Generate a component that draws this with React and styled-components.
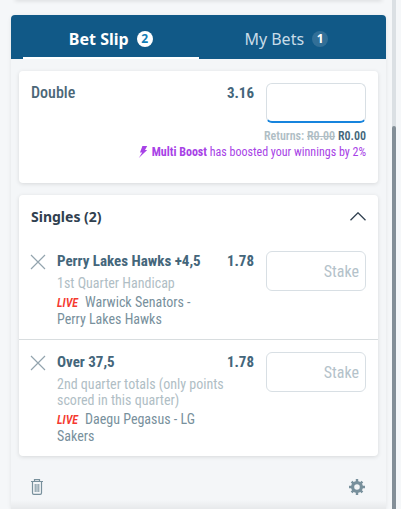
import React from 'react';
import styled, { createGlobalStyle } from 'styled-components';

const singles = [
	{
		name: 'Perry Lakes Hawks +4,5',
		market: '1st Quarter Handicap',
		event: 'Warwick Senators - Perry Lakes Hawks',
		odds: '1.78',
	},
	{
		name: 'Over 37,5',
		market: '2nd quarter totals (only points scored in this quarter)',
		event: 'Daegu Pegasus - LG Sakers',
		odds: '1.78',
	},
];

const App = () => {
	const [tab, setTab] = React.useState('slip');
	const [open, setOpen] = React.useState(true);

	return (
		<>
			<GlobalStyle />
			<Page>
				<Column>
					<PreviousPanel />
					<Panel>
						<Tabs>
							<Tab $active={tab === 'slip'} onClick={() => setTab('slip')}>
								Bet Slip <Count $active={tab === 'slip'}>2</Count>
							</Tab>
							<Tab $active={tab === 'bets'} onClick={() => setTab('bets')}>
								My Bets <Count $active={tab === 'bets'}>1</Count>
							</Tab>
						</Tabs>
						<Cards>
							<DoubleCard>
								<DoubleRow>
									<DoubleName>Double</DoubleName>
									<Odds>3.16</Odds>
									<StakeInput $focused aria-label='Double stake' />
								</DoubleRow>
								<Returns>
									Returns: <s>R0.00</s> <b>R0.00</b>
								</Returns>
								<Boost>
									<svg width='10' height='12' viewBox='0 0 10 12'>
										<path
											d='M4.4 0H9.2L7 4H9.2L0.8 12L4.2 6.6H2Z'
											fill='currentColor'
										/>
									</svg>
									<span>
										<b>Multi Boost</b> has boosted your winnings by 2%
									</span>
								</Boost>
							</DoubleCard>
							<Card>
								<SinglesHeader onClick={() => setOpen(!open)}>
									Singles (2)
									<svg width='16' height='9' viewBox='0 0 16 9'>
										<path
											d='M0.5 8.3L8 0.8L15.5 8.3'
											fill='none'
											stroke='currentColor'
											strokeWidth='1.3'
										/>
									</svg>
								</SinglesHeader>
								{open &&
									singles.map((bet) => (
										<Single key={bet.name}>
											<Remove aria-label='Remove'>
												<svg width='16' height='16' viewBox='0 0 16 16'>
													<path
														d='M1 1L15 15M15 1L1 15'
														fill='none'
														stroke='currentColor'
														strokeWidth='1.2'
													/>
												</svg>
											</Remove>
											<Details>
												<BetName>{bet.name}</BetName>
												<Market>{bet.market}</Market>
												<Event>
													<Live>LIVE</Live>
													{bet.event}
												</Event>
											</Details>
											<Odds>{bet.odds}</Odds>
											<StakeInput placeholder='Stake' />
										</Single>
									))}
							</Card>
						</Cards>
						<Footer>
							<svg width='12' height='16' viewBox='0 0 12 16'>
								<g fill='none' stroke='currentColor'>
									<path d='M0 2.5H12M3.5 2.5V0.6H8.5V2.5' strokeWidth='1.2' />
									<path
										d='M1.5 3V14.1Q1.5 15.4 2.8 15.4H9.2Q10.5 15.4 10.5 14.1V3'
										strokeWidth='1.2'
									/>
									<path d='M4.2 5V13M6 5V13M7.8 5V13' />
								</g>
							</svg>
							<svg width='16' height='16' viewBox='0 0 16 16'>
								<circle
									cx='8'
									cy='8'
									r='4.4'
									fill='none'
									stroke='currentColor'
									strokeWidth='3.2'
								/>
								<path
									d='M8 0V3M8 13V16M0 8H3M13 8H16M2.6 2.6L4.6 4.6M11.4 11.4L13.4 13.4M2.6 13.4L4.6 11.4M11.4 4.6L13.4 2.6'
									fill='none'
									stroke='currentColor'
									strokeWidth='2.4'
								/>
							</svg>
						</Footer>
					</Panel>
				</Column>
				<Scrollbar>
					<Thumb />
				</Scrollbar>
			</Page>
		</>
	);
};

const GlobalStyle = createGlobalStyle`
	* {
		box-sizing: border-box;
	}

	body {
		margin: 0;
		overflow: hidden;
		background-color: #f5f7f9;
		font-family: 'Roboto Condensed', Roboto, sans-serif;
		font-stretch: 75%;
	}

	button {
		border: none;
		padding: 0;
		background: none;
		cursor: pointer;
	}

	svg {
		display: block;
		flex: none;
	}
`;

const Page = styled.div`
	display: flex;
	height: 509px;
	overflow: hidden;
	padding-left: 11px;
`;

const Column = styled.div`
	width: 375px;
	display: flex;
	flex-direction: column;
`;

const PreviousPanel = styled.div`
	height: 4px;
	flex: none;
	margin: -4px 4px 15px;
	box-shadow: 0 1px 4px rgba(0, 0, 0, 0.12);
`;

const Panel = styled.div`
	height: 494px;
	flex: none;
	border-radius: 4px 4px 0 0;
	background-color: #f4f6f8;
	box-shadow: 0 1px 4px rgba(0, 0, 0, 0.08);
`;

const Tabs = styled.div`
	height: 44px;
	padding: 0 12px;
	display: flex;
	border-radius: 4px 4px 0 0;
	background-color: #115987;
`;

const Tab = styled.button`
	flex: 1;
	display: flex;
	justify-content: center;
	align-items: center;
	gap: 8px;
	padding-top: 6px;
	border-bottom: 2px solid ${(props) => (props.$active ? '#fff' : 'transparent')};
	color: ${(props) => (props.$active ? '#fff' : '#c8dce8')};
	font-family: 'Noto Sans', sans-serif;
	font-size: 16px;
	font-weight: ${(props) => (props.$active ? 700 : 400)};
`;

const Count = styled.span`
	width: 16px;
	height: 16px;
	border-radius: 50%;
	background-color: ${(props) => (props.$active ? '#fff' : '#326f97')};
	color: ${(props) => (props.$active ? '#117cb5' : '#fff')};
	font-size: 12px;
	font-weight: 700;
	line-height: 16px;
	text-align: center;
`;

const Cards = styled.div`
	display: flex;
	flex-direction: column;
	gap: 12px;
	padding: 12px 8px 0;
`;

const Card = styled.div`
	border-radius: 4px;
	background-color: #fff;
	box-shadow: 0 1px 4px rgba(0, 0, 0, 0.12);
`;

const DoubleCard = styled(Card)`
	height: 112px;
	padding: 12px;
`;

const DoubleRow = styled.div`
	display: flex;
`;

const DoubleName = styled.div`
	flex: 1;
	color: #4b6777;
	font-size: 16px;
	font-weight: 500;
	line-height: 19px;
`;

const Odds = styled.div`
	margin-right: 12px;
	color: #44667b;
	font-size: 15px;
	font-weight: 700;
	line-height: 21px;
`;

const StakeInput = styled.input`
	width: 100px;
	height: 40px;
	flex: none;
	padding: 0 6px;
	border: 1px solid #d8dfe4;
	border-bottom: ${(props) => (props.$focused ? '2px solid #1784dd' : '1px solid #d8dfe4')};
	border-radius: 6px;
	outline: none;
	background-color: #fff;
	color: #44667b;
	font-family: inherit;
	font-stretch: inherit;
	font-size: 16px;
	text-align: right;

	&::placeholder {
		color: #b4c2ca;
	}
`;

const Returns = styled.div`
	margin-top: 5px;
	color: #b0bec5;
	font-size: 12px;
	font-weight: 600;
	line-height: 16px;
	text-align: right;

	b {
		color: #44667b;
		font-weight: 600;
	}
`;

const Boost = styled.div`
	display: flex;
	justify-content: flex-end;
	align-items: center;
	gap: 4px;
	color: #a742e6;
	font-size: 12px;
	line-height: 16px;
`;

const SinglesHeader = styled.div`
	height: 44px;
	padding: 0 12px 1px;
	display: flex;
	justify-content: space-between;
	align-items: center;
	color: #30404f;
	font-family: 'Noto Sans', sans-serif;
	font-size: 14px;
	font-weight: 700;
	cursor: pointer;
`;

const Single = styled.div`
	height: 101px;
	padding: 12px;
	display: flex;
	align-items: flex-start;
	border-bottom: 1px solid #d8dddf;

	&:last-child {
		height: 116px;
		border-bottom: none;
	}
`;

const Remove = styled.button`
	margin: 3px 11px 0 -1px;
	color: #93a4ae;
`;

const Details = styled.div`
	flex: 1;
	min-width: 0;
	white-space: nowrap;
`;

const BetName = styled.div`
	color: #44667b;
	font-size: 15px;
	font-weight: 700;
	line-height: 21px;
`;

const Market = styled.div`
	width: 170px;
	margin-top: 3px;
	color: #b0bec5;
	font-size: 14px;
	line-height: 16px;
	white-space: normal;
`;

const Event = styled.div`
	width: 160px;
	margin-top: 3px;
	color: #78909c;
	font-size: 14px;
	line-height: 17px;
	white-space: normal;
`;

const Live = styled.span`
	margin-right: 7px;
	color: #f5392f;
	font-size: 12px;
	font-style: italic;
	font-weight: 600;
	line-height: 1;
`;

const Footer = styled.div`
	height: 62px;
	padding: 0 21px 0 20px;
	display: flex;
	justify-content: space-between;
	align-items: center;
	color: #78909c;
	background-image: linear-gradient(to bottom, transparent 44px, rgba(0, 0, 0, 0.06) 54px);
`;

const Scrollbar = styled.div`
	width: 4px;
	height: 509px;
	margin-left: 6px;
	padding-top: 126px;
	background-color: #dbe0e4;
`;

const Thumb = styled.div`
	height: 383px;
	border-radius: 2px 2px 0 0;
	background-color: #848f98;
`;

export default App;
